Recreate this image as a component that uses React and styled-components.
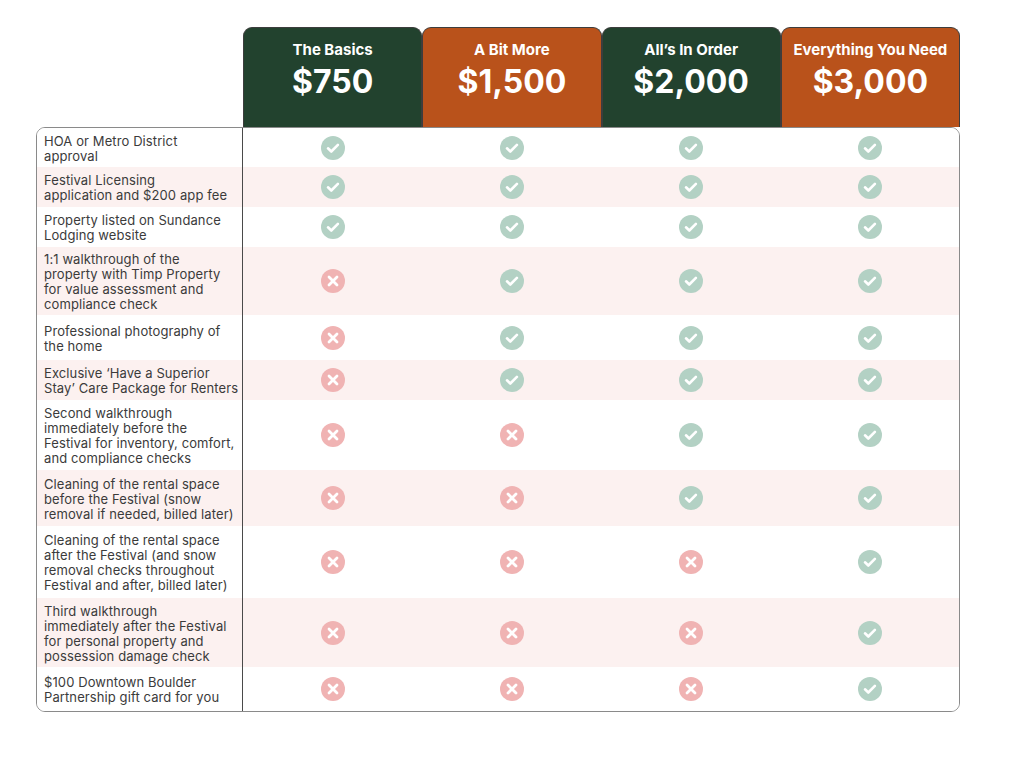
import styled, { createGlobalStyle } from "styled-components";

const GlobalStyle = createGlobalStyle`
  body {
    margin: 0;
    background: #ffffff;
    font-family: Inter, "Liberation Sans", sans-serif;
  }
`;

const plans = [
  { title: "The Basics", price: "$750", tone: "green" },
  { title: "A Bit More", price: "$1,500", tone: "orange" },
  { title: "All’s In Order", price: "$2,000", tone: "green" },
  { title: "Everything You Need", price: "$3,000", tone: "orange" },
];

const features = [
  { lines: ["HOA or Metro District", "approval"], h: 40, has: [1, 1, 1, 1] },
  { lines: ["Festival Licensing", "application and $200 app fee"], h: 40, has: [1, 1, 1, 1] },
  { lines: ["Property listed on Sundance", "Lodging website"], h: 40, has: [1, 1, 1, 1] },
  {
    lines: ["1:1 walkthrough of the", "property with Timp Property", "for value assessment and", "compliance check"],
    h: 68,
    has: [0, 1, 1, 1],
  },
  { lines: ["Professional photography of", "the home"], h: 45, has: [0, 1, 1, 1] },
  { lines: ["Exclusive ‘Have a Superior", "Stay’ Care Package for Renters"], h: 40, has: [0, 1, 1, 1] },
  {
    lines: ["Second walkthrough", "immediately before the", "Festival for inventory, comfort,", "and compliance checks"],
    h: 70,
    has: [0, 0, 1, 1],
  },
  {
    lines: ["Cleaning of the rental space", "before the Festival (snow", "removal if needed, billed later)"],
    h: 56,
    has: [0, 0, 1, 1],
  },
  {
    lines: ["Cleaning of the rental space", "after the Festival (and snow", "removal checks throughout", "Festival and after, billed later)"],
    h: 72,
    has: [0, 0, 0, 1],
  },
  {
    lines: ["Third walkthrough", "immediately after the Festival", "for personal property and", "possession damage check"],
    h: 69,
    has: [0, 0, 0, 1],
  },
  { lines: ["$100 Downtown Boulder", "Partnership gift card for you"], h: 45, has: [0, 0, 0, 1] },
];

const Page = styled.div`
  padding: 27px 0 0 36px;
  width: 924px;
`;

const HeaderRow = styled.div`
  display: grid;
  grid-template-columns: 207px repeat(4, 1fr);
  height: 100px;
`;

const Tab = styled.div`
  background: ${(p) => (p.$tone === "green" ? "#22422e" : "#b9521b")};
  border: 1px solid #3d3d3d;
  border-bottom: none;
  border-radius: 9px 9px 0 0;
  color: #ffffff;
  display: flex;
  flex-direction: column;
  align-items: center;
  padding-top: 12px;
  box-sizing: border-box;
`;

const TabTitle = styled.div`
  font-size: 15px;
  font-weight: 700;
  line-height: 20px;
`;

const TabPrice = styled.div`
  font-size: 32px;
  font-weight: 700;
  line-height: 40px;
  margin-top: 2px;
`;

const Table = styled.div`
  border: 1px solid #8a8a8a;
  border-radius: 9px;
  overflow: hidden;
  box-sizing: border-box;
`;

const Row = styled.div`
  display: grid;
  grid-template-columns: 206px repeat(4, 1fr);
  height: ${(p) => p.$h}px;
  background: ${(p) => (p.$alt ? "#fcf1f0" : "#ffffff")};
`;

const Label = styled.div`
  border-right: 1px solid #4a4a4a;
  padding: 2px 4px 0 7px;
  display: flex;
  flex-direction: column;
  justify-content: center;
  font-size: 13px;
  letter-spacing: 0.1px;
  line-height: 15px;
  color: #3b3b3b;
  white-space: nowrap;
  overflow: hidden;
`;

const Cell = styled.div`
  display: flex;
  align-items: center;
  justify-content: center;
`;

const Check = () => (
  <svg width="24" height="24" viewBox="0 0 24 24">
    <circle cx="12" cy="12" r="12" fill="#b3d1c4" />
    <path d="M7 12.3l3.3 3.2 6.6-6.6" fill="none" stroke="#ffffff" strokeWidth="2.6" strokeLinecap="round" strokeLinejoin="round" />
  </svg>
);

const Cross = () => (
  <svg width="24" height="24" viewBox="0 0 24 24">
    <circle cx="12" cy="12" r="12" fill="#f0b3b3" />
    <path d="M8 8l8 8M16 8l-8 8" fill="none" stroke="#ffffff" strokeWidth="2.8" strokeLinecap="round" />
  </svg>
);

export default function App() {
  return (
    <>
      <GlobalStyle />
      <Page>
        <HeaderRow>
          <div />
          {plans.map((plan) => (
            <Tab key={plan.title} $tone={plan.tone}>
              <TabTitle>{plan.title}</TabTitle>
              <TabPrice>{plan.price}</TabPrice>
            </Tab>
          ))}
        </HeaderRow>
        <Table>
          {features.map((f, i) => (
            <Row key={i} $h={i === 0 || i === features.length - 1 ? f.h - 1 : f.h} $alt={i % 2 === 1}>
              <Label>
                {f.lines.map((line) => (
                  <span key={line}>{line}</span>
                ))}
              </Label>
              {f.has.map((v, j) => (
                <Cell key={j}>{v ? <Check /> : <Cross />}</Cell>
              ))}
            </Row>
          ))}
        </Table>
      </Page>
    </>
  );
}
